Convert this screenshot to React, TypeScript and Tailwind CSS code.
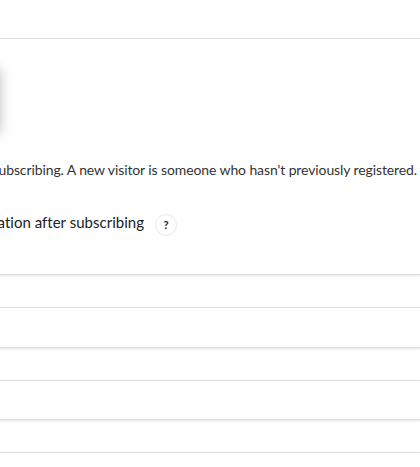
const panels = [
  { id: "confirmation", className: "mt-8 h-[41px]" },
  { id: "redirect", className: "mt-8 h-10" },
  { id: "advanced", className: "mt-8 h-10" },
];

const HelpBadge = () => (
  <button
    type="button"
    aria-label="Help"
    className="ml-[11px] mt-[3px] flex size-[22px] items-center justify-center rounded-full border border-[#e8e8e9] bg-white text-[11px] leading-none font-black text-[#333]"
  >
    ?
  </button>
);

const App = () => {
  return (
    <main className="h-[467px] w-[420px] overflow-hidden bg-white font-['Lato',sans-serif] text-[#333]">
      <div className="h-[39px] border-b border-[#dededf]" />

      <section className="h-[236px] border-b border-[#dededf] shadow-[0_1px_2px_0_rgba(34,36,38,0.12)]">
        <div className="pt-[31px]">
          <div className="-ml-20 h-[62px] w-[79px] shadow-[0_0_12px_1px_rgba(0,0,0,0.25)]" />
        </div>

        <p className="mt-[28px] flex h-5 w-[417px] justify-end text-[14px] leading-5 tracking-[-0.105px] whitespace-nowrap">
          ubscribing. A new visitor is someone who hasn't previously registered.
        </p>

        <div className="mt-[31px] flex h-6 items-center">
          <span className="-mt-0.5 flex w-36 justify-end text-[15px] leading-6 tracking-[0.02px] whitespace-nowrap text-[#222]">
            ation after subscribing
          </span>
          <HelpBadge />
        </div>
      </section>

      {panels.map((panel) => (
        <section
          key={panel.id}
          className={`border-y border-[#dededf] shadow-[0_1px_2px_0_rgba(34,36,38,0.12)] ${panel.className}`}
        />
      ))}
    </main>
  );
};

export default App;
